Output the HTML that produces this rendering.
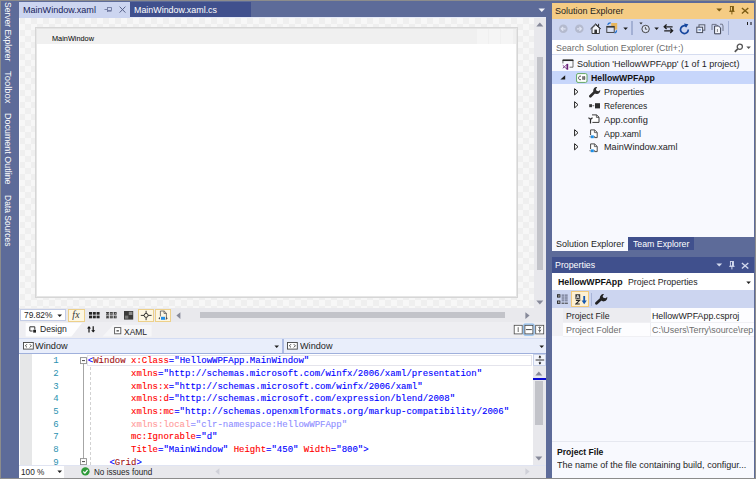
<!DOCTYPE html>
<html><head><meta charset="utf-8"><title>MainWindow.xaml</title>
<style>
html,body{margin:0;padding:0;background:#5d6b99;}
body{width:756px;height:479px;overflow:hidden;font-family:"Liberation Sans",sans-serif;}
#root{position:relative;width:756px;height:479px;overflow:hidden;background:#5d6b99;}
#root div,#root svg{position:absolute;box-sizing:border-box;}
.t{position:absolute;white-space:nowrap;line-height:1;transform-origin:0 50%;font-family:"Liberation Sans",sans-serif;}
.code{position:absolute;-webkit-text-stroke:0.12px currentColor;white-space:pre;font-family:"Liberation Mono",monospace;font-size:9px;line-height:12.68px;}
.code i{font-style:normal}
.b{color:#0000ff}.r{color:#ff0000}.m{color:#a31515}
.fb{color:#8f8fff}.fr{color:#ff9b9b}
.ln{position:absolute;font-family:"Liberation Mono",monospace;font-size:9px;line-height:12.68px;color:#2b91af;text-align:right;white-space:pre;}

</style></head><body>
<div id="root">
<!-- outer frame -->
<div style="left:0;top:0;width:756px;height:1.2px;background:#8c8c8c"></div>
<div style="left:0;top:0;width:1.2px;height:479px;background:#8c8c8c"></div>
<div style="left:755px;top:0;width:1px;height:479px;background:#8c8c8c"></div>
<div style="left:0;top:477.8px;width:756px;height:1.2px;background:#8c8c8c"></div>

<!-- document tabs -->
<div style="left:19px;top:2px;width:111px;height:16px;background:#ccd5f0"></div>
<div style="left:130px;top:2px;width:121px;height:15px;background:#40508d"></div>
<div style="left:130px;top:17px;width:416px;height:1px;background:#e6eaf7"></div>
<!-- pin + close on tab -->
<svg style="left:103px;top:5px" width="26" height="10" viewBox="0 0 26 10">
  <g stroke="#6e789f" stroke-width="0.9" fill="none">
    <path d="M1.5 4.5H4.5M4.5 2V7M4.5 2.5H8.5V5.5H4.5M4.5 6.2H8.5"/>
    <path d="M16.6 1.6L22.4 7.6M22.4 1.6L16.6 7.6" stroke="#59638a" stroke-width="1"/>
  </g>
</svg>
<!-- tab overflow arrow -->
<svg style="left:538px;top:8px" width="8" height="5" viewBox="0 0 8 5"><path d="M0.5 0.5H7L3.75 4Z" fill="#f2f4fa"/></svg>

<!-- design surface (checker) -->
<div style="left:19px;top:18px;width:515px;height:290px;background-color:#f7f7f7;background-image:conic-gradient(#f7f7f7 25%,#efefef 0 50%,#f7f7f7 0 75%,#efefef 0);background-size:12px 12px;background-position:0 0"></div>
<div style="left:19px;top:18px;width:1px;height:290px;background:#fbfbfd"></div>
<!-- v scrollbar of designer -->
<div style="left:534px;top:18px;width:12px;height:290px;background:#e8e8ec"></div>
<div style="left:537px;top:57px;width:6px;height:213px;background:#c2c3c9"></div>
<svg style="left:536px;top:22px" width="8" height="5" viewBox="0 0 8 5"><path d="M0.3 4.6L3.8 0.6L7.3 4.6Z" fill="#868999"/></svg>
<svg style="left:536px;top:299.5px" width="8" height="5" viewBox="0 0 8 5"><path d="M0.3 0.4L3.8 4.4L7.3 0.4Z" fill="#868999"/></svg>

<!-- designed window -->
<div style="left:35px;top:27px;width:483px;height:271px;background:#fff;border:1px solid #d6d6d6"></div>
<div style="left:36px;top:28px;width:481px;height:16px;background:#f0f0f0;border-top:1px solid #e4e4e4"></div>
<div style="left:36px;top:28px;width:1px;height:269px;background:#e6e6e6"></div>
<div style="left:516px;top:28px;width:1px;height:269px;background:#e6e6e6"></div>
<div style="left:36px;top:296px;width:481px;height:1px;background:#e6e6e6"></div>
<div style="left:477px;top:29px;width:11px;height:15px;background:#f5f5f5"></div>
<div style="left:489px;top:29px;width:11px;height:15px;background:#f5f5f5"></div>
<div style="left:501px;top:29px;width:12px;height:15px;background:#f5f5f5"></div>

<!-- designer toolbar row -->
<div style="left:19px;top:308px;width:527px;height:14px;background:#e9e9ed"></div>
<div style="left:20px;top:309px;width:46px;height:12px;background:#fff;border:1px solid #c3cce6"></div>
<svg style="left:57px;top:313.5px" width="6" height="4" viewBox="0 0 6 4"><path d="M0.4 0.4H5L2.7 3Z" fill="#1e1e1e"/></svg>
<!-- fx -->
<div style="left:68px;top:309px;width:17px;height:13px;background:#fdf7e2;border:1px solid #edd08a"></div>
<span class="t" style="left:72.3px;top:310px;font-family:'Liberation Serif',serif;font-style:italic;font-size:9.8px;color:#333;letter-spacing:0.3px">fx</span>
<!-- grid icons -->
<svg style="left:88.6px;top:312.4px" width="12" height="7" viewBox="0 0 12 7"><g fill="#262626"><rect x="0" y="0" width="3" height="2.7"/><rect x="3.8" y="0" width="3" height="2.7"/><rect x="7.6" y="0" width="3" height="2.7"/><rect x="0" y="3.6" width="3" height="2.7"/><rect x="3.8" y="3.6" width="3" height="2.7"/><rect x="7.6" y="3.6" width="3" height="2.7"/></g></svg>
<svg style="left:105.8px;top:312.4px" width="12" height="7" viewBox="0 0 12 7"><g fill="#3a3a3a"><rect x="0" y="0" width="3" height="2.7"/><rect x="3.8" y="0" width="3" height="2.7"/><rect x="7.6" y="0" width="3" height="2.7"/><rect x="0" y="3.6" width="3" height="2.7"/><rect x="3.8" y="3.6" width="3" height="2.7"/><rect x="7.6" y="3.6" width="3" height="2.7"/></g><path d="M0 1.35H10.6M0 4.95H10.6" stroke="#e9e9ed" stroke-width="0.7" stroke-dasharray="0.9 0.9"/></svg>
<svg style="left:123.8px;top:310.8px" width="10" height="9" viewBox="0 0 10 9"><rect x="0" y="0" width="9.2" height="8.6" fill="#3a3a3a"/><rect x="4.8" y="0.8" width="3.6" height="3.2" fill="#8a8a8a"/><rect x="0.9" y="4.6" width="3.4" height="3.1" fill="#777"/></svg>
<!-- snap buttons -->
<div style="left:138px;top:309px;width:16px;height:13px;background:#fdf7e2;border:1px solid #edd08a"></div>
<svg style="left:139.5px;top:310px" width="13" height="11" viewBox="0 0 13 11"><g stroke="#1e1e1e" stroke-width="0.9" fill="none"><path d="M0.8 5.4H4M8.2 5.4H11.6M6.1 0.8V3.3M6.1 7.5V10.2"/><circle cx="6.1" cy="5.4" r="2"/></g></svg>
<div style="left:155px;top:309px;width:16px;height:13px;background:#fdf7e2;border:1px solid #edd08a"></div>
<svg style="left:158px;top:310px" width="11" height="11" viewBox="0 0 11 11"><g fill="none" stroke="#555" stroke-width="0.8"><path d="M2.4 6.4V1H6.2L8.4 3.2V9.2H7.6"/><path d="M6 1V3.4H8.4"/></g><rect x="3" y="6.8" width="4" height="3" fill="#1f8fe8"/><path d="M0.4 8.3L2 7.1V9.5Z M9.8 8.3L8.2 7.1V9.5Z" fill="#444"/></svg>
<!-- designer h scrollbar -->
<svg style="left:175.6px;top:312px" width="5" height="8" viewBox="0 0 5 8"><path d="M4.4 0.2L0.4 3.6L4.4 7Z" fill="#868999"/></svg>
<div style="left:200px;top:312px;width:305px;height:6px;background:#c2c3c9"></div>
<svg style="left:525px;top:311.7px" width="5" height="8" viewBox="0 0 5 8"><path d="M0.4 0.2L4.6 3.6L0.4 7Z" fill="#868999"/></svg>

<!-- Design/XAML tab row -->
<div style="left:19px;top:322px;width:527px;height:16px;background:#eeeef2"></div>
<svg style="left:25px;top:322.5px" width="60" height="14" viewBox="0 0 60 14"><path d="M0.7 0H57L46.5 13.4H0.7Z" fill="#fdfdfe"/></svg>
<svg style="left:100px;top:325px" width="53" height="12" viewBox="0 0 53 12"><path d="M13 0H51.6V11.5H2.5Z" fill="#f6f6f8"/></svg>
<!-- design icon -->
<svg style="left:28.8px;top:325.6px" width="9" height="8" viewBox="0 0 9 8"><path d="M0.8 0.8H5.8V3.6M3.6 5H0.8V0.8" stroke="#333" stroke-width="1" fill="none"/><rect x="4.2" y="3.8" width="2.8" height="2.8" fill="#222"/></svg>
<!-- swap arrows -->
<svg style="left:86.6px;top:326px" width="9" height="7" viewBox="0 0 9 7"><g fill="#111"><path d="M2 0L4 2.4H2.6V6.4H1.4V2.4H0Z"/><path d="M6.2 6.6L4.2 4.2H5.6V0.2H6.8V4.2H8.2Z"/></g></svg>
<!-- xaml icon -->
<svg style="left:114px;top:327px" width="8" height="8" viewBox="0 0 8 8"><rect x="0.6" y="0.6" width="6.2" height="6.2" fill="#fff" stroke="#555" stroke-width="0.9"/><rect x="2.5" y="3" width="2.4" height="1.6" fill="#666"/></svg>
<!-- split buttons -->
<svg style="left:512px;top:323px" width="34" height="13" viewBox="0 0 34 13">
<rect x="2.2" y="2.3" width="8" height="8.6" fill="#fff" stroke="#4a4a4a" stroke-width="0.8"/><path d="M6.2 4.2V9" stroke="#444" stroke-width="0.8"/>
<rect x="11.6" y="1" width="10.6" height="11.2" rx="1.4" fill="#d6e8fb" stroke="#79b2ec" stroke-width="0.9"/>
<rect x="12.9" y="2.3" width="8" height="8.6" fill="#fff" stroke="#3a3a3a" stroke-width="0.8"/><path d="M14 6.6H19.8" stroke="#333" stroke-width="0.9"/>
<rect x="23.7" y="2.3" width="8" height="8.6" fill="#fff" stroke="#4a4a4a" stroke-width="0.8"/><path d="M26.2 3.8L27.7 5.3L29.2 3.8M26.2 6.8L27.7 8.3L29.2 6.8M27.7 3.4V9.6" stroke="#333" stroke-width="0.7" fill="none"/>
</svg>
<!-- combo row -->
<div style="left:19px;top:338px;width:527px;height:16px;background:#e9eefb;border-top:1px solid #d3dcf3;border-bottom:1px solid #9fb0dc"></div>
<div style="left:282px;top:339px;width:2px;height:14px;background:#aebce2"></div>
<svg style="left:22.5px;top:342px" width="11" height="8" viewBox="0 0 11 8"><rect x="0.5" y="0.5" width="9.8" height="6.6" fill="#fff" stroke="#444" stroke-width="0.9"/><path d="M4 2.2L2.4 3.8L4 5.4M6.8 2.2L8.4 3.8L6.8 5.4" stroke="#333" stroke-width="0.9" fill="none"/></svg>
<svg style="left:287.3px;top:342px" width="11" height="8" viewBox="0 0 11 8"><rect x="0.5" y="0.5" width="9.8" height="6.6" fill="#fff" stroke="#444" stroke-width="0.9"/><path d="M4 2.2L2.4 3.8L4 5.4M6.8 2.2L8.4 3.8L6.8 5.4" stroke="#333" stroke-width="0.9" fill="none"/></svg>
<svg style="left:273.5px;top:344.5px" width="6" height="4" viewBox="0 0 6 4"><path d="M0.4 0.4H5L2.7 3Z" fill="#1e1e1e"/></svg>
<svg style="left:538.8px;top:344.5px" width="6" height="4" viewBox="0 0 6 4"><path d="M0.4 0.4H5L2.7 3Z" fill="#1e1e1e"/></svg>

<!-- code editor -->
<div style="left:19px;top:354px;width:514px;height:111px;background:#fff"></div>
<div style="left:20px;top:354px;width:12px;height:111px;background:#e6e7e8"></div>
<!-- current line highlight -->
<div style="left:87px;top:355px;width:445px;height:11px;background:#fff;border:1.2px solid #e4e4ec"></div>
<!-- outlining -->
<div style="left:83px;top:364px;width:1px;height:95px;background:#a6a6a6"></div>
<svg style="left:80px;top:357px" width="8" height="8" viewBox="0 0 8 8"><rect x="0.5" y="0.6" width="6" height="6" fill="#fff" stroke="#8f8f8f" stroke-width="0.9"/><path d="M2 3.6H5" stroke="#333" stroke-width="0.9"/></svg>
<svg style="left:80px;top:458px" width="8" height="8" viewBox="0 0 8 8"><rect x="0.5" y="0.6" width="6" height="6" fill="#fff" stroke="#8f8f8f" stroke-width="0.9"/><path d="M2 3.6H5" stroke="#333" stroke-width="0.9"/></svg>
<div style="left:90px;top:367px;width:0px;height:98px;border-left:1px dashed #d2d2d2"></div>
<!-- code v scrollbar -->
<div style="left:533px;top:354px;width:13px;height:111px;background:#e8e8ec"></div>
<div style="left:533px;top:354px;width:13px;height:12px;background:#f3f5fc;border:1px solid #c9d2ea"></div>
<svg style="left:534.5px;top:355.2px" width="10" height="10" viewBox="0 0 10 10"><g stroke="#1e1e1e" stroke-width="0.9" fill="none"><path d="M0.6 5H9.2M4.9 0.8V3.4M4.9 6.6V9.2"/></g><path d="M3.5 2.5L4.9 0.6L6.3 2.5ZM3.5 7.5L4.9 9.4L6.3 7.5Z" fill="#1e1e1e"/></svg>
<svg style="left:535.3px;top:370.5px" width="8" height="5" viewBox="0 0 8 5"><path d="M0.3 4.6L3.8 0.6L7.3 4.6Z" fill="#868999"/></svg>
<div style="left:533px;top:378px;width:13px;height:2px;background:#0a0ad2"></div>
<div style="left:535px;top:381px;width:8px;height:44px;background:#c2c3c9"></div>
<svg style="left:535.3px;top:456.3px" width="8" height="5" viewBox="0 0 8 5"><path d="M0.3 0.4L3.8 4.4L7.3 0.4Z" fill="#868999"/></svg>

<!-- status row -->
<div style="left:19px;top:465px;width:527px;height:13px;background:#e8e8ec;border-top:1px solid #e0e4f2"></div>
<div style="left:19px;top:466px;width:45px;height:12px;background:#fff"></div>
<svg style="left:56.5px;top:470px" width="6" height="4" viewBox="0 0 6 4"><path d="M0.4 0.4H5L2.7 3Z" fill="#1e1e1e"/></svg>
<svg style="left:81.3px;top:467px" width="9" height="9" viewBox="0 0 9 9"><circle cx="4.4" cy="4.4" r="4.2" fill="#2e9b3a"/><path d="M2.3 4.5L3.9 6.1L6.6 2.8" stroke="#fff" stroke-width="1.2" fill="none"/></svg>
<svg style="left:214.5px;top:468px" width="5" height="8" viewBox="0 0 5 8"><path d="M4.4 0.2L0.4 3.6L4.4 7Z" fill="#cfd0d8"/></svg>
<svg style="left:525.4px;top:468px" width="5" height="8" viewBox="0 0 5 8"><path d="M0.4 0.2L4.6 3.6L0.4 7Z" fill="#cfd0d8"/></svg>

<!-- ===== Solution Explorer ===== -->
<div style="left:552px;top:3px;width:202px;height:16px;background:#f5cc84"></div>
<div style="left:552px;top:19px;width:202px;height:21px;background:#ccd5f0"></div>
<div style="left:552px;top:40px;width:202px;height:197px;background:#f8f9fe"></div>
<div style="left:552px;top:40px;width:202px;height:15px;background:#fff;border-bottom:1px solid #d5dcf0"></div>
<div style="left:552px;top:71px;width:202px;height:13px;background:#c7d6fb"></div>
<!-- bottom tabs -->
<div style="left:552px;top:236px;width:76px;height:15px;background:#f8f9fe"></div>
<div style="left:628px;top:237px;width:66px;height:13px;background:#40508d"></div>

<!-- ===== Properties ===== -->
<div style="left:552px;top:257px;width:202px;height:16px;background:#40508d"></div>
<div style="left:552px;top:273px;width:202px;height:205px;background:#f8f9fe"></div>
<div style="left:552px;top:273px;width:202px;height:17px;background:#fff"></div>
<div style="left:552px;top:290px;width:202px;height:18px;background:#ccd5f0"></div>
<div style="left:563px;top:308px;width:191px;height:28px;background:#fdfdff"></div>
<div style="left:552px;top:308px;width:11px;height:28px;background:#f1f1f5"></div>
<div style="left:563px;top:308px;width:87px;height:14px;background:#ececf0"></div>
<div style="left:650px;top:308px;width:1px;height:28px;background:#eeeef2"></div>
<div style="left:563px;top:322px;width:191px;height:1px;background:#f0f0f4"></div>
<div style="left:563px;top:336px;width:191px;height:1px;background:#f0f0f4"></div>
<div style="left:552px;top:441px;width:202px;height:1px;background:#e6e8f0"></div>
<!-- code text -->
<div class="ln" style="left:30px;top:355.3px;width:28.6px">1
2
3
4
5
6
7
8
9</div>
<div class="code" style="left:87.8px;top:355.3px"><i class="b">&lt;</i><i class="m">Window</i><i class="r"> x:Class</i><i class="b">="HellowWPFApp.MainWindow"</i>
<i class="r">        xmlns</i><i class="b">="http://schemas.microsoft.com/winfx/2006/xaml/presentation"</i>
<i class="r">        xmlns:x</i><i class="b">="http://schemas.microsoft.com/winfx/2006/xaml"</i>
<i class="r">        xmlns:d</i><i class="b">="http://schemas.microsoft.com/expression/blend/2008"</i>
<i class="r">        xmlns:mc</i><i class="b">="http://schemas.openxmlformats.org/markup-compatibility/2006"</i>
<i class="fr">        xmlns:local</i><i class="fb">="clr-namespace:HellowWPFApp"</i>
<i class="r">        mc:Ignorable</i><i class="b">="d"</i>
<i class="r">        Title</i><i class="b">="MainWindow"</i><i class="r"> Height</i><i class="b">="450"</i><i class="r"> Width</i><i class="b">="800"&gt;</i>
<i class="b">    &lt;</i><i class="m">Grid</i><i class="b">&gt;</i></div>
<!-- SE title icons -->
<svg style="left:716.4px;top:8.1px" width="8" height="5" viewBox="0 0 8 5"><path d="M0.3 0.4H6.2L3.25 3.6Z" fill="#7a5a12"/></svg>
<svg style="left:728.8px;top:6.1px" width="7" height="10" viewBox="0 0 7 10"><rect x="1.4" y="0.5" width="3" height="4.6" fill="none" stroke="#7a5a12" stroke-width="0.9"/><rect x="3" y="0.5" width="1.6" height="4.6" fill="#7a5a12"/><path d="M0.2 5.3H5.6M2.9 5.3V8.4" stroke="#7a5a12" stroke-width="1"/></svg>
<svg style="left:740.6px;top:6.9px" width="9" height="8" viewBox="0 0 9 8"><path d="M0.9 0.9L7.3 6.5M7.3 0.9L0.9 6.5" stroke="#7a5a12" stroke-width="1.35" fill="none"/></svg>
<!-- SE toolbar -->
<svg style="left:558px;top:23px" width="28" height="12" viewBox="0 0 28 12">
 <circle cx="5.3" cy="5.8" r="4.3" fill="#b4bace"/><path d="M7.6 5.8H3.4M5.2 3.8L3.2 5.8L5.2 7.8" stroke="#dfe4f3" stroke-width="1.2" fill="none"/>
 <circle cx="21.3" cy="5.8" r="4.3" fill="#b4bace"/><path d="M19 5.8H23.2M21.4 3.8L23.4 5.8L21.4 7.8" stroke="#dfe4f3" stroke-width="1.2" fill="none"/>
</svg>
<svg style="left:590px;top:22.6px" width="12" height="12" viewBox="0 0 12 12"><path d="M0.5 6L5.7 0.9L10.9 6" stroke="#2a2a2a" stroke-width="1" fill="none"/><path d="M2 5.2V10.5H9.4V5.2L5.7 1.8Z" stroke="#2a2a2a" stroke-width="0.9" fill="#f4f6fb"/><rect x="4.4" y="6.6" width="2.6" height="4" fill="#333"/><path d="M8.6 0.8V3.2" stroke="#2a2a2a" stroke-width="1"/></svg>
<svg style="left:606.4px;top:22.4px" width="13" height="12" viewBox="0 0 13 12"><rect x="5.2" y="1" width="6" height="6.6" fill="#e8b65c"/><rect x="0.8" y="4.4" width="7.4" height="6" fill="#d9e0f4" stroke="#333" stroke-width="0.9"/><path d="M0.8 4.9H8.2" stroke="#333" stroke-width="1.4"/><path d="M1.6 2.8C2.4 1.2 3.6 0.8 4.8 1M10.6 8.4C10.4 10 9.6 10.8 8.6 10.8" stroke="#1f6fd0" stroke-width="1.2" fill="none"/></svg>
<svg style="left:622.8px;top:26.8px" width="6" height="4" viewBox="0 0 6 4"><path d="M0.3 0.4H4.9L2.6 3Z" fill="#1e1e1e"/></svg>
<div style="left:631px;top:21px;width:2px;height:14px;background:#a3b0d4"></div>
<svg style="left:638.6px;top:22.4px" width="12" height="12" viewBox="0 0 12 12"><circle cx="6.6" cy="7" r="3.7" fill="#dfe5f5" stroke="#333" stroke-width="0.9"/><path d="M6.4 4.9V7.2H8.2" stroke="#333" stroke-width="0.8" fill="none"/><path d="M0.4 0.6H3.6L2 2.6Z" fill="#2a2a2a"/></svg>
<svg style="left:654.2px;top:26.8px" width="6" height="4" viewBox="0 0 6 4"><path d="M0.3 0.4H4.9L2.6 3Z" fill="#1e1e1e"/></svg>
<svg style="left:663px;top:24px" width="11" height="10" viewBox="0 0 11 10"><g stroke="#1e1e1e" stroke-width="1.3" fill="none"><path d="M1.2 2.8H9.6M3.6 0.6L1.2 2.8L3.6 5"/><path d="M9.6 6.8H1.2M7.2 4.6L9.6 6.8L7.2 9"/></g></svg>
<svg style="left:679.4px;top:23.2px" width="11" height="12" viewBox="0 0 11 12"><path d="M7.6 3.4A3.9 3.9 0 1 0 9.3 6.6" stroke="#17479e" stroke-width="1.7" fill="none"/><path d="M5 0.4L9.4 1.2L7 4.8Z" fill="#17479e"/></svg>
<svg style="left:696.4px;top:24px" width="10" height="10" viewBox="0 0 10 10"><rect x="3" y="0.8" width="5.8" height="5.4" fill="#dfe5f6" stroke="#5a5f70" stroke-width="1"/><rect x="0.8" y="3.2" width="5.8" height="5.4" fill="#e9eefa" stroke="#4a4f60" stroke-width="1"/><path d="M2.4 5.9H5" stroke="#3d6ec0" stroke-width="1"/></svg>
<svg style="left:710.6px;top:23px" width="13" height="12" viewBox="0 0 13 12"><path d="M1 7V1.4H5.2L6.6 2.8M9 1.2H11.4L12 3V8" stroke="#70768a" stroke-width="1" fill="none"/><path d="M3.6 10.8V3H7.6L9.6 5V10.8Z" fill="#f4f6fc" stroke="#3a3f50" stroke-width="1"/><path d="M6.4 6V9" stroke="#888" stroke-width="1"/></svg>
<div style="left:728px;top:21px;width:1px;height:14px;background:#a3b0d4"></div>
<div style="left:747px;top:22px;width:1px;height:3px;background:#1e1e1e"></div>
<div style="left:750px;top:22px;width:2px;height:3px;background:#6b6f80"></div>
<!-- search icons -->
<svg style="left:733.5px;top:42.5px" width="10" height="10" viewBox="0 0 10 10"><circle cx="5.8" cy="3.8" r="2.6" fill="none" stroke="#555" stroke-width="1.3"/><path d="M3.8 5.8L0.8 8.8" stroke="#555" stroke-width="1.7"/></svg>
<svg style="left:746.2px;top:46px" width="6" height="4" viewBox="0 0 6 4"><path d="M0.3 0.4H4.9L2.6 3Z" fill="#555"/></svg>
<!-- tree icons -->
<svg style="left:561.5px;top:58.5px" width="13" height="12" viewBox="0 0 13 12"><path d="M0.9 4.4V1H11V8.2H7.6" stroke="#4a4a4a" stroke-width="0.8" fill="none"/><path d="M0.6 1.3H11.4" stroke="#2a2a2a" stroke-width="1.5"/><g transform="translate(0.5,4.9)"><path d="M0.3 1.5L2 2.9L0.3 4.3" stroke="#68217a" stroke-width="0.9" fill="none"/><path d="M1.8 2.9L4.6 0.5V5.3Z" stroke="#68217a" stroke-width="0.8" fill="#fff"/><rect x="4.2" y="0" width="1.5" height="5.8" fill="#68217a"/></g></svg>
<svg style="left:560px;top:75.4px" width="6" height="5" viewBox="0 0 6 5"><path d="M5.2 0.2V4.6H0.4Z" fill="#1e1e1e"/></svg>
<svg style="left:575.6px;top:73px" width="12" height="10" viewBox="0 0 12 10"><rect x="0.6" y="0.6" width="10.4" height="8.8" rx="1.4" fill="#fff" stroke="#63a863" stroke-width="1"/><path d="M5 3.2C3.4 2.6 2.6 3.8 2.6 5C2.6 6.2 3.4 7.2 5 6.6" stroke="#555" stroke-width="1" fill="none"/><path d="M6 4.2H9.4M6 5.8H9.4M7 3V7M8.4 3V7" stroke="#555" stroke-width="0.8"/></svg>
<!-- expanders -->
<svg style="left:573.8px;top:87.6px" width="5" height="8" viewBox="0 0 5 8" overflow="visible"><path d="M0.6 0.7L4 3.7L0.6 6.9Z" fill="#fff" stroke="#222" stroke-width="1"/></svg>
<svg style="left:573.8px;top:101.4px" width="5" height="8" viewBox="0 0 5 8" overflow="visible"><path d="M0.6 0.7L4 3.7L0.6 6.9Z" fill="#fff" stroke="#222" stroke-width="1"/></svg>
<svg style="left:573.8px;top:129px" width="5" height="8" viewBox="0 0 5 8" overflow="visible"><path d="M0.6 0.7L4 3.7L0.6 6.9Z" fill="#fff" stroke="#222" stroke-width="1"/></svg>
<svg style="left:573.8px;top:142.8px" width="5" height="8" viewBox="0 0 5 8" overflow="visible"><path d="M0.6 0.7L4 3.7L0.6 6.9Z" fill="#fff" stroke="#222" stroke-width="1"/></svg>
<!-- wrench -->
<svg style="left:588.6px;top:86.6px" width="12" height="11" viewBox="0 0 12 11"><path d="M1.4 9.2L6 4.6" stroke="#2e2e2e" stroke-width="2.7" stroke-linecap="round"/><path d="M11.2 3A3.5 3.5 0 1 1 8.2 0L6.9 2.2L7.6 3.7L9.4 4.2Z" fill="#2e2e2e"/></svg>
<!-- references -->
<svg style="left:589px;top:102.6px" width="12" height="6" viewBox="0 0 12 6"><rect x="0.2" y="1.2" width="2.8" height="3" fill="#3a3a3a"/><rect x="3.4" y="2.3" width="1.8" height="0.9" fill="#555"/><rect x="6" y="0.2" width="5" height="5.2" fill="#2e2e2e"/></svg>
<!-- app.config -->
<svg style="left:588.4px;top:114.4px" width="12" height="10" viewBox="0 0 12 10"><path d="M4 0.9H8.6L11 3.2V8.4H4.4" fill="#fff" stroke="#3a3a3a" stroke-width="1"/><path d="M8.4 1V3.4H11" stroke="#3a3a3a" stroke-width="0.8" fill="none"/><path d="M0.8 3.4C0.8 5.4 4.2 5.4 4.2 3.4M2.5 5V9.4" stroke="#2a2a2a" stroke-width="1.2" fill="none"/></svg>
<!-- xaml files -->
<svg style="left:589.4px;top:128.8px" width="10" height="10" viewBox="0 0 10 10"><path d="M1.6 6V0.9H5.6L8.2 3.4V8.6H5.4" fill="#fff" stroke="#4a4a4a" stroke-width="1"/><path d="M5.4 1V3.6H8.2" stroke="#4a4a4a" stroke-width="0.8" fill="none"/><rect x="1.8" y="6.4" width="3" height="2.8" fill="#1e90e8"/><path d="M0.2 7.8L1.4 6.8V8.8ZM6.4 7.8L5.2 6.8V8.8Z" fill="#555"/></svg>
<svg style="left:589.4px;top:142.6px" width="10" height="10" viewBox="0 0 10 10"><path d="M1.6 6V0.9H5.6L8.2 3.4V8.6H5.4" fill="#fff" stroke="#4a4a4a" stroke-width="1"/><path d="M5.4 1V3.6H8.2" stroke="#4a4a4a" stroke-width="0.8" fill="none"/><rect x="1.8" y="6.4" width="3" height="2.8" fill="#1e90e8"/><path d="M0.2 7.8L1.4 6.8V8.8ZM6.4 7.8L5.2 6.8V8.8Z" fill="#555"/></svg>
<!-- Properties title icons -->
<svg style="left:716.4px;top:262.90000000000003px" width="8" height="5" viewBox="0 0 8 5"><path d="M0.3 0.4H6.2L3.25 3.6Z" fill="#d3daee"/></svg>
<svg style="left:728.8px;top:260.90000000000003px" width="7" height="10" viewBox="0 0 7 10"><rect x="1.4" y="0.5" width="3" height="4.6" fill="none" stroke="#d3daee" stroke-width="0.9"/><rect x="3" y="0.5" width="1.6" height="4.6" fill="#d3daee"/><path d="M0.2 5.3H5.6M2.9 5.3V8.4" stroke="#d3daee" stroke-width="1"/></svg>
<svg style="left:740.6px;top:261.7px" width="9" height="8" viewBox="0 0 9 8"><path d="M0.9 0.9L7.3 6.5M7.3 0.9L0.9 6.5" stroke="#d3daee" stroke-width="1.35" fill="none"/></svg>
<svg style="left:746.4px;top:280.5px" width="6" height="4" viewBox="0 0 6 4"><path d="M0.3 0.4H4.9L2.6 3Z" fill="#1e1e1e"/></svg>
<!-- Properties toolbar -->
<svg style="left:557.4px;top:293.6px" width="12" height="11" viewBox="0 0 12 11"><rect x="0.5" y="0.7" width="2.4" height="2.4" fill="#fff" stroke="#222" stroke-width="0.9"/><rect x="0.5" y="7" width="2.4" height="2.4" fill="#fff" stroke="#222" stroke-width="0.9"/><path d="M1.1 1.9H2.3M1.7 1.3V2.5M1.1 8.2H2.3" stroke="#222" stroke-width="0.6"/><g fill="#80879f"><rect x="4.6" y="0.4" width="2.7" height="1.5"/><rect x="7.8" y="0.4" width="2.9" height="1.5"/><rect x="4.6" y="2.3" width="2.7" height="1.5"/><rect x="7.8" y="2.3" width="2.9" height="1.5"/><rect x="4.6" y="4.2" width="2.7" height="1.5"/><rect x="7.8" y="4.2" width="2.9" height="1.5"/><rect x="4.6" y="6.1" width="2.7" height="1.3"/><rect x="7.8" y="6.1" width="2.9" height="1.3"/></g><path d="M4.6 9.2H7.3M7.8 9.2H10.9" stroke="#333" stroke-width="1"/></svg>
<div style="left:571px;top:291px;width:18px;height:16px;background:#fdf0d3;border:1px solid #f0c97c"></div>
<svg style="left:574.6px;top:293.6px" width="13" height="11" viewBox="0 0 13 11"><rect x="0.4" y="0.2" width="4.8" height="5" fill="#3a3a3a"/><path d="M1.5 4.4L2.8 1.2L4.1 4.4M2 3.3H3.6" stroke="#f2f2f2" stroke-width="0.8" fill="none"/><path d="M0.9 6.4H4.6L0.9 10H4.8" stroke="#2a2a2a" stroke-width="1.1" fill="none"/><path d="M9.2 2V8" stroke="#1558b0" stroke-width="1.8"/><path d="M6.6 6.4H11.8L9.2 10.2Z" fill="#1558b0"/></svg>
<div style="left:591px;top:293px;width:1px;height:13px;background:#a9b5d8"></div>
<svg style="left:595px;top:294px" width="13" height="11" viewBox="0 0 13 11"><path d="M1.5 9.2L6.6 4.4" stroke="#222" stroke-width="2.8" stroke-linecap="round"/><path d="M12.2 3A3.7 3.7 0 1 1 9 0L7.6 2.2L8.4 3.8L10.4 4.3Z" fill="#222"/></svg>

<span class="t" id="t0" style="left:22.6px;top:6.1px;font-size:9.0px;color:#17235a;transform:scaleX(1.0051);">MainWindow.xaml</span>
<span class="t" id="t1" style="left:134.0px;top:6.1px;font-size:9.0px;color:#ffffff;transform:scaleX(0.9877);">MainWindow.xaml.cs</span>
<span class="t" id="t2" style="left:51.5px;top:34.7px;font-size:7.3px;color:#000;transform:scaleX(1.0052);">MainWindow</span>
<span class="t" id="t3" style="left:23.5px;top:311.1px;font-size:8.8px;color:#1e1e1e;transform:scaleX(0.9550);">79.82%</span>
<span class="t" id="t4" style="left:39.5px;top:324.8px;font-size:9.0px;color:#1e1e1e;transform:scaleX(0.9566);">Design</span>
<span class="t" id="t5" style="left:124.0px;top:327.8px;font-size:9.0px;color:#1e1e1e;transform:scaleX(0.9382);">XAML</span>
<span class="t" id="t6" style="left:34.8px;top:342.4px;font-size:9.0px;color:#1e1e1e;transform:scaleX(1.0214);">Window</span>
<span class="t" id="t7" style="left:300.0px;top:342.4px;font-size:9.0px;color:#1e1e1e;transform:scaleX(1.0151);">Window</span>
<span class="t" id="t8" style="left:21.0px;top:467.7px;font-size:9.0px;color:#1e1e1e;transform:scaleX(0.9165);">100 %</span>
<span class="t" id="t9" style="left:94.2px;top:467.7px;font-size:9.0px;color:#1e1e1e;transform:scaleX(0.9017);">No issues found</span>
<span class="t" id="t10" style="left:555.0px;top:6.9px;font-size:9.0px;color:#1e1e1e;transform:scaleX(1.0008);">Solution Explorer</span>
<span class="t" id="t11" style="left:556.0px;top:44.3px;font-size:9.0px;color:#6a6a6a;transform:scaleX(0.9814);">Search Solution Explorer (Ctrl+;)</span>
<span class="t" id="t12" style="left:577.1px;top:60.3px;font-size:9.0px;color:#1e1e1e;transform:scaleX(1.0055);">Solution 'HellowWPFApp' (1 of 1 project)</span>
<span class="t" id="t13" style="left:591.4px;top:74.1px;font-size:9.0px;color:#111;font-weight:bold;transform:scaleX(0.9682);">HellowWPFApp</span>
<span class="t" id="t14" style="left:604.0px;top:88.2px;font-size:9.0px;color:#1e1e1e;transform:scaleX(0.9822);">Properties</span>
<span class="t" id="t15" style="left:604.0px;top:101.9px;font-size:9.0px;color:#1e1e1e;transform:scaleX(0.9407);">References</span>
<span class="t" id="t16" style="left:604.0px;top:115.7px;font-size:9.0px;color:#1e1e1e;transform:scaleX(1.0298);">App.config</span>
<span class="t" id="t17" style="left:604.0px;top:129.5px;font-size:9.0px;color:#1e1e1e;transform:scaleX(0.9858);">App.xaml</span>
<span class="t" id="t18" style="left:604.0px;top:143.3px;font-size:9.0px;color:#1e1e1e;transform:scaleX(1.0134);">MainWindow.xaml</span>
<span class="t" id="t19" style="left:556.0px;top:239.6px;font-size:9.0px;color:#1e1e1e;transform:scaleX(0.9964);">Solution Explorer</span>
<span class="t" id="t20" style="left:633.4px;top:239.6px;font-size:9.0px;color:#ffffff;transform:scaleX(0.9719);">Team Explorer</span>
<span class="t" id="t21" style="left:555.0px;top:260.6px;font-size:9.0px;color:#ffffff;transform:scaleX(0.9797);">Properties</span>
<span class="t" id="t22" style="left:557.5px;top:278.1px;font-size:9.0px;color:#111;font-weight:bold;transform:scaleX(0.9773);">HellowWPFApp</span>
<span class="t" id="t23" style="left:628.0px;top:278.1px;font-size:9.0px;color:#1e1e1e;transform:scaleX(0.9730);">Project Properties</span>
<span class="t" id="t24" style="left:565.5px;top:312.0px;font-size:9.0px;color:#1e1e1e;transform:scaleX(0.9663);">Project File</span>
<span class="t" id="t25" style="left:565.5px;top:325.7px;font-size:9.0px;color:#6d6d6d;transform:scaleX(0.9905);">Project Folder</span>
<span class="t" id="t26" style="left:651.7px;top:312.0px;font-size:9.0px;color:#1e1e1e;transform:scaleX(0.9806);">HellowWPFApp.csproj</span>
<span class="t" id="t27" style="left:651.7px;top:325.7px;font-size:9.0px;color:#6d6d6d;transform:scaleX(0.9880);">C:\Users\Terry\source\rep</span>
<span class="t" id="t28" style="left:556.7px;top:447.9px;font-size:9.0px;color:#111;font-weight:bold;transform:scaleX(0.9543);">Project File</span>
<span class="t" id="t29" style="left:556.7px;top:461.1px;font-size:9.0px;color:#1e1e1e;transform:scaleX(1.0036);">The name of the file containing build, configur...</span>
<span class="t" id="v0" style="left:11.6px;top:2.0px;font-size:9px;color:#fff;transform-origin:0 0;transform:rotate(90deg) scaleX(0.9499);">Server Explorer</span>
<span class="t" id="v1" style="left:11.6px;top:70.5px;font-size:9px;color:#fff;transform-origin:0 0;transform:rotate(90deg) scaleX(1.0473);">Toolbox</span>
<span class="t" id="v2" style="left:11.6px;top:112.7px;font-size:9px;color:#fff;transform-origin:0 0;transform:rotate(90deg) scaleX(0.9938);">Document Outline</span>
<span class="t" id="v3" style="left:11.6px;top:194.6px;font-size:9px;color:#fff;transform-origin:0 0;transform:rotate(90deg) scaleX(0.9426);">Data Sources</span>
</div>
</body></html>
